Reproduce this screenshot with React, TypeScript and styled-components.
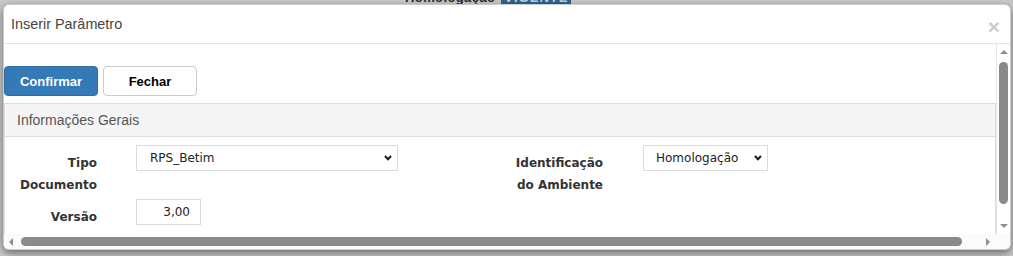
import React from 'react';
import styled, { createGlobalStyle } from 'styled-components';

const GlobalStyle = createGlobalStyle`
  html, body {
    margin: 0;
    padding: 0;
  }
  body {
    width: 1013px;
    height: 256px;
    overflow: hidden;
    background: #cbcbcb;
    font-family: "Liberation Sans", Arial, sans-serif;
  }
`;

const Backdrop = styled.div`
  position: relative;
  width: 1013px;
  height: 256px;
  overflow: hidden;
  background: #cbcbcb;
`;

// page behind the overlay, only the bottom of its status line shows
const PageStatus = styled.div`
  display: flex;
  align-items: flex-start;
  gap: 6px;
  height: 16px;
  margin-top: -12px;
  padding-left: 405px;
  font: bold 13px "Liberation Sans", Arial, sans-serif;
  color: #2a2a2a;
`;

const StatusText = styled.span`
  padding-top: 4px;
  line-height: 12px;
  letter-spacing: 0.4px;
`;

const StatusBadge = styled.span`
  width: 70px;
  height: 16px;
  box-sizing: border-box;
  padding-top: 4px;
  line-height: 12px;
  text-align: center;
  letter-spacing: 1px;
  background: #2b6790;
  color: #c8d4dc;
`;

const Modal = styled.div`
  position: absolute;
  top: 4px;
  left: 3px;
  width: 1008px;
  height: 246px;
  box-sizing: border-box;
  display: flex;
  flex-direction: column;
  background: #fff;
  border: 1px solid rgba(0, 0, 0, 0.2);
  border-radius: 6px;
  box-shadow: 0 3px 9px rgba(0, 0, 0, 0.5);
  overflow: hidden;
`;

const ModalHeader = styled.div`
  height: 38px;
  flex: none;
  display: flex;
  align-items: center;
  justify-content: space-between;
  padding: 0 10px 0 7px;
  border-bottom: 1px solid #e5e5e5;
`;

const ModalTitle = styled.h4`
  margin: 0;
  font: 14.4px "Liberation Sans", Arial, sans-serif;
  color: #444;
`;

const CloseButton = styled.button`
  border: 0;
  padding: 0;
  margin-top: 4px;
  background: none;
  font: bold 21px/1 "Liberation Sans", Arial, sans-serif;
  color: #000;
  opacity: 0.2;
  cursor: pointer;
`;

const ModalBody = styled.div`
  flex: 1;
  min-height: 0;
  display: flex;
  flex-direction: column;
`;

const ScrollRow = styled.div`
  flex: 1;
  min-height: 0;
  display: flex;
`;

const Viewport = styled.div`
  flex: 1;
  min-width: 0;
  overflow: hidden;
  padding-top: 22px;
`;

const ButtonBar = styled.div`
  display: flex;
  gap: 5px;
`;

const Button = styled.button<{ $primary?: boolean }>`
  width: 94px;
  height: 30px;
  box-sizing: border-box;
  border-radius: 4px;
  border: 1px solid ${(p) => (p.$primary ? '#2e6da4' : '#ccc')};
  background: ${(p) => (p.$primary ? '#337ab7' : '#fff')};
  color: ${(p) => (p.$primary ? '#fff' : '#000')};
  font: bold 13px "Liberation Sans", Arial, sans-serif;
  cursor: pointer;
`;

const Panel = styled.section`
  margin-top: 7px;
  border: 1px solid #ddd;
`;

const PanelHeading = styled.div`
  height: 32px;
  display: flex;
  align-items: center;
  padding-left: 12px;
  background: #f5f5f5;
  border-bottom: 1px solid #ddd;
  font: 14px "Liberation Sans", Arial, sans-serif;
  color: #555;
`;

const PanelBody = styled.div`
  padding-top: 8px;
  padding-bottom: 20px;
`;

const FormRow = styled.div<{ $gap?: number }>`
  display: flex;
  align-items: flex-start;
  margin-top: ${(p) => p.$gap ?? 0}px;
`;

const Label = styled.label<{ $width: number; $offset?: number }>`
  width: ${(p) => p.$width}px;
  margin-left: ${(p) => p.$offset ?? 0}px;
  flex: none;
  box-sizing: border-box;
  padding-top: 7px;
  text-align: right;
  font: bold 12px/22px "DejaVu Sans", Verdana, sans-serif;
  color: #333;
`;

const SelectWrap = styled.div<{ $width: number; $offset: number }>`
  position: relative;
  flex: none;
  width: ${(p) => p.$width}px;
  margin-left: ${(p) => p.$offset}px;
`;

const Select = styled.select<{ $pad: number }>`
  appearance: none;
  width: 100%;
  height: 26px;
  box-sizing: border-box;
  padding: 0 0 0 ${(p) => p.$pad}px;
  border: 1px solid #dcdcdc;
  border-radius: 0;
  background: #fff;
  font: 12px "DejaVu Sans", Verdana, sans-serif;
  color: #222;
  outline: none;
`;

const Chevron = styled.svg<{ $right: number }>`
  position: absolute;
  top: 10px;
  right: ${(p) => p.$right}px;
  pointer-events: none;
`;

const NumberInput = styled.input`
  flex: none;
  width: 65px;
  height: 26px;
  margin-left: 39px;
  box-sizing: border-box;
  padding: 0 10px 0 4px;
  border: 1px solid #dcdcdc;
  text-align: right;
  font: 12px "DejaVu Sans", Verdana, sans-serif;
  color: #222;
  outline: none;
`;

const VScroll = styled.div`
  width: 14px;
  flex: none;
  box-sizing: border-box;
  display: flex;
  flex-direction: column;
  align-items: center;
  border-left: 1px solid #e6e6e6;
  background: #fff;
`;

const HScroll = styled.div`
  height: 15px;
  flex: none;
  display: flex;
  align-items: center;
  background: #fbfbfb;
`;

const ArrowCell = styled.div<{ $size: number }>`
  flex: none;
  width: ${(p) => p.$size}px;
  height: ${(p) => p.$size}px;
  display: flex;
  align-items: center;
  justify-content: center;
`;

const Spacer = styled.div`
  flex: 1;
`;

const VThumb = styled.div`
  width: 9px;
  height: 142px;
  margin-top: 2px;
  border-radius: 5px;
  background: #8a8a8a;
`;

const HThumb = styled.div`
  height: 9px;
  width: 941px;
  margin-left: 4px;
  border-radius: 5px;
  background: #8a8a8a;
`;

const Corner = styled.div`
  width: 14px;
  height: 15px;
  flex: none;
`;

const ChevronDown = ({ right }: { right: number }) => (
  <Chevron $right={right} width="8" height="6" viewBox="0 0 8 6">
    <polyline points="1,1 4,4.2 7,1" fill="none" stroke="#1a1a1a" strokeWidth="2" />
  </Chevron>
);

const Tri = ({ dir }: { dir: 'up' | 'down' | 'left' | 'right' }) => {
  const pts = {
    up: '0,4 4,0 8,4',
    down: '0,0 8,0 4,4',
    left: '4,0 4,8 0,4',
    right: '0,0 4,4 0,8',
  }[dir];
  const vertical = dir === 'up' || dir === 'down';
  return (
    <svg width={vertical ? 8 : 4} height={vertical ? 4 : 8} viewBox={vertical ? '0 0 8 4' : '0 0 4 8'}>
      <polygon points={pts} fill="#8f8f8f" />
    </svg>
  );
};

const App: React.FC = () => (
  <Backdrop>
    <GlobalStyle />
    <PageStatus>
      <StatusText>Homologação</StatusText>
      <StatusBadge>VIGENTE</StatusBadge>
    </PageStatus>
    <Modal>
      <ModalHeader>
        <ModalTitle>Inserir Parâmetro</ModalTitle>
        <CloseButton aria-label="Fechar">×</CloseButton>
      </ModalHeader>
      <ModalBody>
        <ScrollRow>
          <Viewport>
            <ButtonBar>
              <Button $primary>Confirmar</Button>
              <Button>Fechar</Button>
            </ButtonBar>
            <Panel>
              <PanelHeading>Informações Gerais</PanelHeading>
              <PanelBody>
                <FormRow>
                  <Label $width={92}>Tipo Documento</Label>
                  <SelectWrap $width={262} $offset={39}>
                    <Select $pad={13} defaultValue="RPS_Betim">
                      <option>RPS_Betim</option>
                    </Select>
                    <ChevronDown right={6} />
                  </SelectWrap>
                  <Label $width={95} $offset={110}>Identificação do Ambiente</Label>
                  <SelectWrap $width={125} $offset={40}>
                    <Select $pad={12} defaultValue="Homologação">
                      <option>Homologação</option>
                      <option>Produção</option>
                    </Select>
                    <ChevronDown right={6} />
                  </SelectWrap>
                </FormRow>
                <FormRow $gap={3}>
                  <Label $width={92}>Versão</Label>
                  <NumberInput defaultValue="3,00" />
                </FormRow>
              </PanelBody>
            </Panel>
          </Viewport>
          <VScroll>
            <ArrowCell $size={16}>
              <Tri dir="up" />
            </ArrowCell>
            <VThumb />
            <Spacer />
            <ArrowCell $size={16}>
              <Tri dir="down" />
            </ArrowCell>
          </VScroll>
        </ScrollRow>
        <HScroll>
          <ArrowCell $size={13}>
            <Tri dir="left" />
          </ArrowCell>
          <HThumb />
          <Spacer />
          <ArrowCell $size={16}>
            <Tri dir="right" />
          </ArrowCell>
          <Corner />
        </HScroll>
      </ModalBody>
    </Modal>
  </Backdrop>
);

export default App;
